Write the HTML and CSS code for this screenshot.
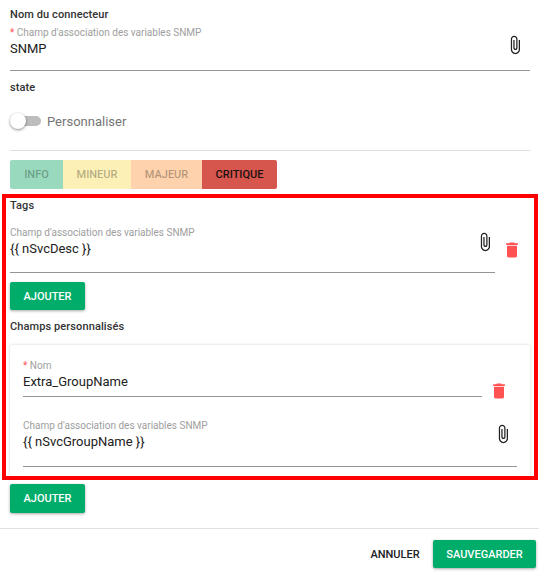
FILE: index.html
```html
<!DOCTYPE html>
<html lang="fr">
<head>
    <meta charset="utf-8">
    <title>Connecteur SNMP</title>
    <link rel="stylesheet" href="styles.css">
</head>
<body>
    <svg class="icon-defs" width="0" height="0">
        <symbol id="clip" viewBox="0 0 24 24">
            <path d="M16.5 6v11.5c0 2.21-1.79 4-4 4s-4-1.79-4-4V5c0-1.38 1.12-2.5 2.5-2.5s2.5 1.12 2.5 2.5v10.5c0 .55-.45 1-1 1s-1-.45-1-1V6H10v9.5c0 1.38 1.12 2.5 2.5 2.5s2.5-1.12 2.5-2.5V5c0-2.21-1.79-4-4-4S7 2.79 7 5v12.5c0 3.04 2.46 5.5 5.5 5.5s5.5-2.46 5.5-5.5V6h-1.5z"/>
        </symbol>
        <symbol id="trash" viewBox="0 0 24 24">
            <path d="M6 19c0 1.1.9 2 2 2h8c1.1 0 2-.9 2-2V7H6v12zM19 4h-3.5l-1-1h-5l-1 1H5v2h14V4z"/>
        </symbol>
    </svg>

    <div class="dialog">
        <div class="content">
            <h3 class="title title-first">Nom du connecteur</h3>
            <div class="field field-name">
                <div class="field-text">
                    <label class="field-label"><span class="req">*</span> Champ d'association des variables SNMP</label>
                    <div class="field-value">SNMP</div>
                </div>
                <svg class="icon icon-clip icon-clip-name"><use href="#clip"/></svg>
            </div>

            <h3 class="title title-state">state</h3>
            <div class="switch-row">
                <span class="switch"><span class="switch-track"></span><span class="switch-thumb"></span></span>
                <span class="switch-label">Personnaliser</span>
            </div>
            <hr class="divider">

            <div class="levels">
                <button class="level level-info">INFO</button>
                <button class="level level-minor">MINEUR</button>
                <button class="level level-major">MAJEUR</button>
                <button class="level level-critical">CRITIQUE</button>
            </div>

            <h3 class="title title-tags">Tags</h3>
            <div class="row row-tag">
                <div class="field field-tag">
                    <div class="field-text">
                        <label class="field-label">Champ d'association des variables SNMP</label>
                        <div class="field-value">{{ nSvcDesc }}</div>
                    </div>
                    <svg class="icon icon-clip"><use href="#clip"/></svg>
                </div>
                <svg class="icon icon-trash"><use href="#trash"/></svg>
            </div>
            <button class="btn btn-green btn-add">AJOUTER</button>

            <h3 class="title title-custom">Champs personnalisés</h3>
            <div class="card">
                <div class="row row-custom">
                    <div class="field field-custom-name">
                        <div class="field-text">
                            <label class="field-label"><span class="req">*</span> Nom</label>
                            <div class="field-value">Extra_GroupName</div>
                        </div>
                    </div>
                    <svg class="icon icon-trash"><use href="#trash"/></svg>
                </div>
                <div class="field field-custom-value">
                    <div class="field-text">
                        <label class="field-label">Champ d'association des variables SNMP</label>
                        <div class="field-value">{{ nSvcGroupName }}</div>
                    </div>
                    <svg class="icon icon-clip"><use href="#clip"/></svg>
                </div>
            </div>
            <button class="btn btn-green btn-add btn-add-last">AJOUTER</button>
        </div>

        <div class="footer">
            <button class="btn btn-text">ANNULER</button>
            <button class="btn btn-green btn-save">SAUVEGARDER</button>
        </div>
    </div>

    <div class="highlight"></div>
</body>
</html>
```

FILE: styles.css
```css
* {
    margin: 0;
    padding: 0;
    box-sizing: border-box;
}

body {
    font-family: Roboto, "Liberation Sans", sans-serif;
    background: #fff;
    color: #212121;
    width: 539px;
    height: 574px;
    overflow: hidden;
    position: relative;
}

.icon-defs {
    position: absolute;
}

.content {
    padding: 0 9px 0 10px;
    height: 529px;
    border-bottom: 1px solid #e0e0e0;
}

.title {
    font-size: 11px;
    font-weight: 500;
    line-height: 13px;
    color: #333;
    letter-spacing: 0.1px;
}

.title-first {
    padding-top: 8px;
}

.title-state {
    margin-top: 10px;
}

.title-tags {
    margin-top: 10px;
}

.title-custom {
    margin-top: 10px;
}

.field {
    display: flex;
    align-items: flex-start;
    border-bottom: 1px solid #949494;
}

.field-text {
    flex: 1;
}

.field-label {
    display: block;
    font-size: 10px;
    line-height: 12px;
    color: #9e9e9e;
}

.req {
    color: #ff5252;
}

.field-value {
    font-size: 13px;
    line-height: 16px;
    margin-top: 2px;
    color: #212121;
}

.field-name {
    height: 45px;
    margin-top: 5px;
    padding-top: 1px;
}

.icon {
    display: block;
    width: 20px;
    height: 20px;
    flex: none;
}

.icon-clip {
    fill: #212121;
}

.icon-trash {
    fill: #ff5252;
}

.icon-clip-name {
    margin-top: 8px;
    margin-right: 5px;
}

.switch-row {
    display: flex;
    align-items: center;
    height: 16px;
    margin-top: 19px;
}

.switch {
    position: relative;
    width: 31px;
    height: 16px;
}

.switch-track {
    position: absolute;
    left: 2px;
    top: 3px;
    width: 29px;
    height: 10px;
    border-radius: 5px;
    background: #bdbdbd;
}

.switch-thumb {
    position: absolute;
    left: 0;
    top: 0;
    width: 16px;
    height: 16px;
    border-radius: 50%;
    background: #fff;
    box-shadow: 0 1px 3px rgba(0, 0, 0, 0.45);
}

.switch-label {
    margin-left: 6px;
    font-size: 13px;
    color: #757575;
}

.divider {
    border: none;
    border-top: 1px solid #e0e0e0;
    margin-top: 21px;
}

.levels {
    display: flex;
    margin-top: 9px;
    height: 29px;
}

.level {
    border: none;
    font-family: inherit;
    font-size: 11px;
    font-weight: 500;
    color: rgba(0, 0, 0, 0.3);
    height: 29px;
}

.level-info {
    width: 53px;
    background: #99dabe;
    border-radius: 2px 0 0 2px;
}

.level-minor {
    width: 68px;
    background: #fdf0b6;
}

.level-major {
    width: 71px;
    background: #fdd2ac;
}

.level-critical {
    width: 75px;
    background: #d6564d;
    color: #1c1010;
    border-radius: 0 2px 2px 0;
}

.row {
    display: flex;
    align-items: flex-start;
}

.row-tag {
    margin-top: 15px;
}

.row-tag .icon-trash {
    margin: 13px 0 0 7px;
}

.field-tag {
    width: 485px;
    height: 46px;
}

.field-tag .icon-clip {
    margin-top: 5px;
}

.btn {
    border: none;
    font-family: inherit;
    font-size: 11px;
    font-weight: 500;
    height: 28px;
    border-radius: 2px;
}

.btn-green {
    background: #00ac69;
    color: #fff;
    box-shadow: 0 1px 3px rgba(0, 0, 0, 0.35);
}

.btn-add {
    display: block;
    width: 75px;
    margin-top: 9px;
}

.btn-add-last {
    height: 29px;
    margin-top: 7px;
}

.card {
    margin-top: 12px;
    height: 132px;
    padding: 15px 13px 0;
    box-shadow: 0 0 3px rgba(0, 0, 0, 0.18);
    border-radius: 2px;
}

.field-custom-name {
    width: 459px;
    height: 37px;
}

.row-custom .icon-trash {
    margin: 21px 0 0 7px;
}

.field-custom-value {
    width: 494px;
    height: 47px;
    margin-top: 19px;
}

.field-custom-value .icon-clip {
    margin-top: 4px;
    margin-right: 4px;
}

.footer {
    display: flex;
    justify-content: flex-end;
    align-items: flex-start;
    gap: 7px;
    padding: 11px 3px 0 0;
}

.btn-text {
    width: 62px;
    background: none;
    color: #212121;
}

.btn-save {
    width: 103px;
}

.highlight {
    position: absolute;
    left: 2px;
    top: 194px;
    width: 536px;
    height: 286px;
    border: 4px solid #f00;
}
```
